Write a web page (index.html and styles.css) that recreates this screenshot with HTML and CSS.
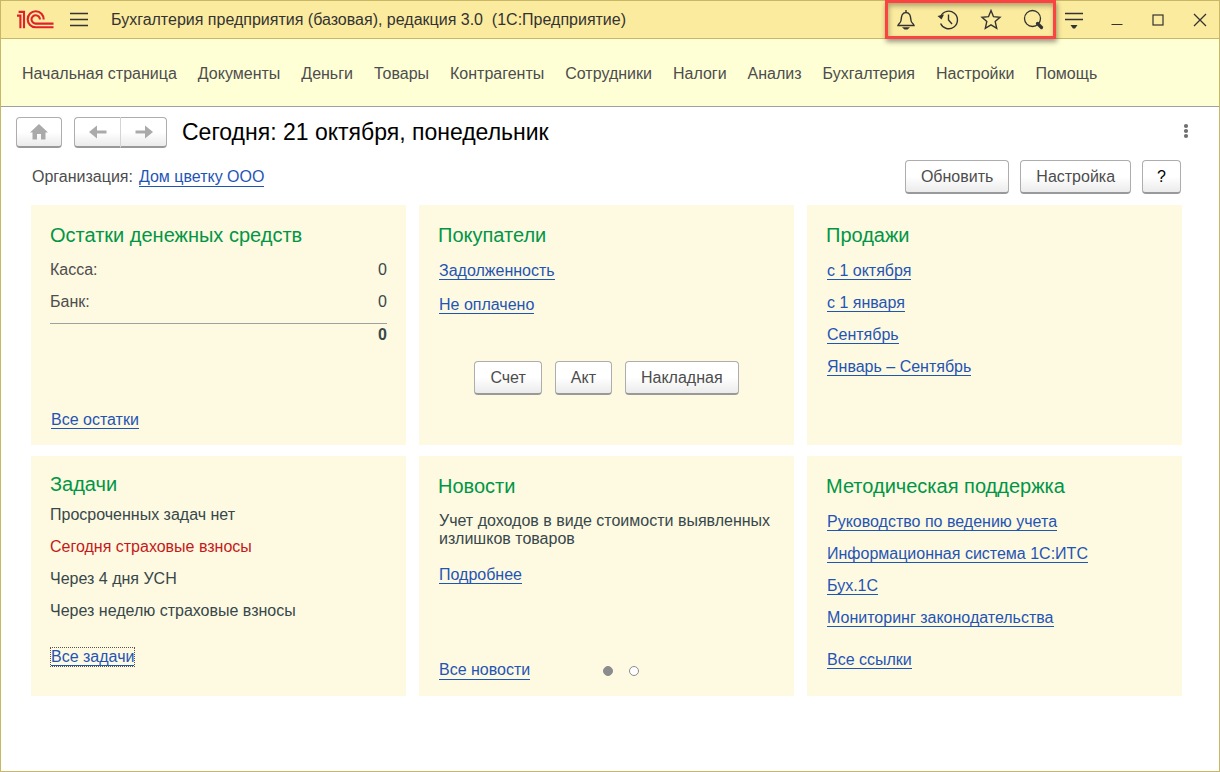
FILE: index.html
```html
<!DOCTYPE html>
<html lang="ru">
<head>
<meta charset="utf-8">
<title>Бухгалтерия предприятия (базовая), редакция 3.0</title>
<link rel="stylesheet" href="styles.css">
</head>
<body>
<div class="window">
  <header class="titlebar">
    <svg class="logo" width="38" height="20" viewBox="0 0 38 20" role="img" aria-label="1С">
      <g fill="none" stroke="#e0202a" stroke-width="2.1">
        <path d="M1 5.600H4.400V18.200M2.600 1.900H8V18.200"/>
        <path d="M27.700 9.500A8 8 0 1 0 19.700 17.300H37.500"/>
        <path d="M23.900 9.500A4.200 4.200 0 1 0 19.700 13.600H37.500"/>
      </g>
    </svg>
    <button class="icon-btn menu-btn" aria-label="Главное меню">
      <svg width="18" height="16" viewBox="0 0 18 16"><path d="M0 1.500H18M0 7.500H18M0 13.500H18" stroke="#333" stroke-width="1.300"/></svg>
    </button>
    <span class="app-title">Бухгалтерия предприятия (базовая), редакция 3.0&nbsp; (1С:Предприятие)</span>
    <div class="highlight">
      <button class="icon-btn" aria-label="Уведомления">
        <svg width="22" height="22" viewBox="0 0 22 22"><path d="M11 1V3M3 16.500H19C18.500 14.500 16.500 14.500 16 11.500C15.500 7 15 3.500 11 3.500S6.500 7 6 11.500C5.500 14.500 3.500 14.500 3 16.500Z" fill="none" stroke="#333" stroke-width="1.400"/><path d="M7 18.300H15L12.500 20.500H9.500Z" fill="#333"/></svg>
      </button>
      <button class="icon-btn" aria-label="История">
        <svg width="22" height="22" viewBox="0 0 22 22"><path d="M3.800 7A8.800 8.800 0 1 1 3.600 14.500M11.500 5.500V11L15 15" fill="none" stroke="#333" stroke-width="1.400"/><path d="M0.500 7L7 5.500L4.500 10.500Z" fill="#333"/></svg>
      </button>
      <button class="icon-btn" aria-label="Избранное">
        <svg width="22" height="22" viewBox="0 0 22 22"><path d="M11 1.500L13.500 7.700L20 8.300L15.200 12.600L16.700 19.300L11 15.800L5.300 19.300L6.800 12.600L2 8.300L8.500 7.700Z" fill="none" stroke="#333" stroke-width="1.400"/></svg>
      </button>
      <button class="icon-btn" aria-label="Поиск">
        <svg width="22" height="22" viewBox="0 0 22 22"><circle cx="10.500" cy="9.500" r="8" fill="none" stroke="#333" stroke-width="1.300"/><path d="M15.500 14.500L19.500 18.500" stroke="#333" stroke-width="3.200" stroke-linecap="round"/></svg>
      </button>
    </div>
    <button class="icon-btn" aria-label="Сервис">
      <svg width="20" height="20" viewBox="0 0 20 20"><path d="M1 3.500H19M1 9.500H19" stroke="#333" stroke-width="1.300"/><path d="M6.500 15H13.500L11 18.500H9Z" fill="#333"/></svg>
    </button>
    <div class="window-controls">
      <button class="icon-btn" aria-label="Свернуть">
        <svg width="12" height="12" viewBox="0 0 12 12"><path d="M0.500 10.500H11.500" stroke="#333"/></svg>
      </button>
      <button class="icon-btn" aria-label="Развернуть">
        <svg width="12" height="12" viewBox="0 0 12 12"><rect x="1" y="1" width="10" height="10" fill="none" stroke="#333" stroke-width="1.200"/></svg>
      </button>
      <button class="icon-btn" aria-label="Закрыть">
        <svg width="14" height="14" viewBox="0 0 14 14"><path d="M1 1L13 13M13 1L1 13" stroke="#333" stroke-width="1.300"/></svg>
      </button>
    </div>
  </header>

  <nav class="sections">
    <a href="#">Начальная страница</a>
    <a href="#">Документы</a>
    <a href="#">Деньги</a>
    <a href="#">Товары</a>
    <a href="#">Контрагенты</a>
    <a href="#">Сотрудники</a>
    <a href="#">Налоги</a>
    <a href="#">Анализ</a>
    <a href="#">Бухгалтерия</a>
    <a href="#">Настройки</a>
    <a href="#">Помощь</a>
  </nav>

  <main class="page">
    <div class="page-head">
      <button class="btn nav-btn" aria-label="Домой">
        <svg width="18" height="16" viewBox="0 0 18 16"><path d="M9 0L18 8.500H15.500V15.500H11V10H7V15.500H2.500V8.500H0Z" fill="#aaa"/></svg>
      </button>
      <div class="nav-pair">
        <button class="btn nav-btn" aria-label="Назад">
          <svg width="18" height="14" viewBox="0 0 18 14"><path d="M17.500 7H5" stroke="#aaa" stroke-width="3"/><path d="M0 7L8 0.500V13.500Z" fill="#aaa"/></svg>
        </button>
        <button class="btn nav-btn" aria-label="Вперед">
          <svg width="18" height="14" viewBox="0 0 18 14"><path d="M0.500 7H13" stroke="#aaa" stroke-width="3"/><path d="M18 7L10 0.500V13.500Z" fill="#aaa"/></svg>
        </button>
      </div>
      <h1>Сегодня: 21 октября, понедельник</h1>
      <button class="icon-btn more" aria-label="Еще">
        <svg width="6" height="16" viewBox="0 0 6 16"><g fill="#707070"><circle cx="3" cy="3" r="2.100"/><circle cx="3" cy="8" r="2.100"/><circle cx="3" cy="13" r="2.100"/></g></svg>
      </button>
    </div>

    <div class="toolbar">
      <span class="org">Организация:</span>
      <a class="link" href="#">Дом цветку ООО</a>
      <div class="actions">
        <button class="btn">Обновить</button>
        <button class="btn">Настройка</button>
        <button class="btn help">?</button>
      </div>
    </div>

    <div class="cards">
      <section class="card">
        <h2>Остатки денежных средств</h2>
        <table class="balance">
          <tbody>
            <tr><th scope="row">Касса:</th><td>0</td></tr>
            <tr><th scope="row">Банк:</th><td>0</td></tr>
          </tbody>
          <tfoot><tr><td colspan="2">0</td></tr></tfoot>
        </table>
        <div class="foot"><a class="link" href="#">Все остатки</a></div>
      </section>

      <section class="card">
        <h2>Покупатели</h2>
        <ul class="list links loose">
          <li><a class="link" href="#">Задолженность</a></li>
          <li><a class="link" href="#">Не оплачено</a></li>
        </ul>
        <div class="create">
          <button class="btn">Счет</button>
          <button class="btn">Акт</button>
          <button class="btn">Накладная</button>
        </div>
      </section>

      <section class="card">
        <h2>Продажи</h2>
        <ul class="list links">
          <li><a class="link" href="#">с 1 октября</a></li>
          <li><a class="link" href="#">с 1 января</a></li>
          <li><a class="link" href="#">Сентябрь</a></li>
          <li><a class="link" href="#">Январь – Сентябрь</a></li>
        </ul>
      </section>

      <section class="card tasks">
        <h2>Задачи</h2>
        <ul class="list">
          <li>Просроченных задач нет</li>
          <li class="due">Сегодня страховые взносы</li>
          <li>Через 4 дня УСН</li>
          <li>Через неделю страховые взносы</li>
        </ul>
        <div class="foot"><a class="link focused" href="#">Все задачи</a></div>
      </section>

      <section class="card">
        <h2>Новости</h2>
        <p class="news">Учет доходов в виде стоимости выявленных излишков товаров</p>
        <div class="details"><a class="link" href="#">Подробнее</a></div>
        <div class="foot news-foot">
          <a class="link" href="#">Все новости</a>
          <div class="dots">
            <button class="dot current" aria-label="Новость 1"></button>
            <button class="dot" aria-label="Новость 2"></button>
          </div>
        </div>
      </section>

      <section class="card support">
        <h2>Методическая поддержка</h2>
        <ul class="list links">
          <li><a class="link" href="#">Руководство по ведению учета</a></li>
          <li><a class="link" href="#">Информационная система 1С:ИТС</a></li>
          <li><a class="link" href="#">Бух.1С</a></li>
          <li><a class="link" href="#">Мониторинг законодательства</a></li>
        </ul>
        <div class="foot"><a class="link" href="#">Все ссылки</a></div>
      </section>
    </div>
  </main>
</div>
</body>
</html>
```

FILE: styles.css
```css
* { box-sizing: border-box; }

body {
  margin: 0;
  font: 16px/18px "Liberation Sans", Arial, sans-serif;
  color: #4d4d4d;
  background: #fff;
}

button { font: inherit; color: inherit; cursor: pointer; }
svg { display: block; }

.window {
  min-height: 100vh;
  border: 1px solid #c9b768;
}

.titlebar {
  display: flex;
  align-items: center;
  height: 38px;
  padding: 0 12px 0 15px;
  background: #fbeb9e;
  border-bottom: 1px solid #c9b768;
  color: #333;
}

.icon-btn { padding: 0; border: 0; background: none; }
.menu-btn { margin: 0 23px 0 16px; }
.app-title { flex: 1; white-space: nowrap; }

.highlight {
  display: flex;
  justify-content: space-between;
  align-items: center;
  width: 171px;
  height: 39px;
  margin-right: 8px;
  padding: 0 9px 0 7px;
  border: 3px solid #fc4343;
  box-shadow: 1px 3px 5px rgba(0, 0, 0, 0.4), inset 1px 3px 5px rgba(0, 0, 0, 0.3);
}

.window-controls {
  display: flex;
  align-items: center;
  gap: 29px;
  margin-left: 27px;
}

.sections {
  display: flex;
  gap: 21px;
  padding: 26px 21px 23px;
  background: #ffffd6;
  border-bottom: 1px solid #a0a0a0;
  white-space: nowrap;
}
.sections a { color: #4d4d4d; text-decoration: none; }

.page { padding: 10px 37px 20px 15px; }

.page-head { display: flex; align-items: center; }

.btn {
  height: 34px;
  padding: 0 15px;
  border: 1px solid #adadad;
  border-bottom: 2px solid #999;
  border-radius: 4px;
  background: linear-gradient(#fff 50%, #ebebeb);
  color: #4d4d4d;
}

.nav-btn {
  display: flex;
  align-items: center;
  justify-content: center;
  width: 46px;
  height: 31px;
  padding: 0;
}
.nav-pair { display: flex; margin: 0 15px 0 12px; }
.nav-pair .nav-btn:first-child { width: 47px; border-radius: 4px 0 0 4px; border-right-color: #d4d4d4; }
.nav-pair .nav-btn:last-child { border-radius: 0 4px 4px 0; border-left: 0; }

h1 {
  flex: 1;
  margin: 0;
  padding-bottom: 2px;
  font-size: 23px;
  line-height: 28px;
  font-weight: 400;
  color: #000;
}
.more { margin-right: -7px; padding-bottom: 4px; }

.toolbar {
  display: flex;
  align-items: center;
  gap: 6px;
  margin: 12px 0 11px;
  padding-left: 16px;
}
.actions { display: flex; gap: 11px; margin: 0 1px 0 auto; }
.actions .help { padding: 0 14px; color: #000; }

.link {
  color: #1f55b5;
  text-decoration: none;
  border-bottom: 1px solid #1f55b5;
}

.cards {
  display: grid;
  grid-template-columns: repeat(3, 1fr);
  grid-auto-rows: minmax(240px, auto);
  gap: 11px 13px;
  padding-left: 15px;
}

.card {
  display: flex;
  flex-direction: column;
  padding: 18px 19px 16px;
  background: #fef9e1;
  color: #36484b;
}

h2 {
  margin: 0 0 14px;
  font-size: 20px;
  line-height: 24px;
  font-weight: 400;
  color: #009646;
}

.list {
  display: flex;
  flex-direction: column;
  gap: 14px;
  margin: 0;
  padding: 0;
  list-style: none;
}
.links { padding: 1px 0 0 1px; }
.loose { gap: 16px; }

.balance { width: 100%; border-collapse: collapse; }
.balance th, .balance td { padding: 0 0 14px; }
.balance tr:last-child > * { padding-bottom: 12px; }
.balance th { text-align: left; font-weight: 400; color: #4d4d4d; }
.balance td { text-align: right; }
.balance tfoot tr > td {
  padding: 2px 0 0;
  border-top: 1px solid #a0a0a0;
  font-weight: 700;
}

.foot { margin-top: auto; padding-left: 1px; }
.create { display: flex; justify-content: center; gap: 13px; margin-top: 47px; }

.tasks { padding-top: 16px; padding-bottom: 30px; }
.tasks h2 { margin-bottom: 10px; }
.due { color: #c41a1a; }
.focused { outline: 1px dotted #555; }

.news { margin: 0; padding-left: 1px; }
.details { margin-top: 18px; padding-left: 1px; }
.news-foot { display: flex; align-items: center; gap: 73px; }
.dots { display: flex; gap: 16px; }
.dot {
  width: 10px;
  height: 10px;
  padding: 0;
  border: 1px solid #8c8c8c;
  border-radius: 50%;
  background: #fff;
}
.current { background: #8c8c8c; }

.support { padding-bottom: 27px; }
```
